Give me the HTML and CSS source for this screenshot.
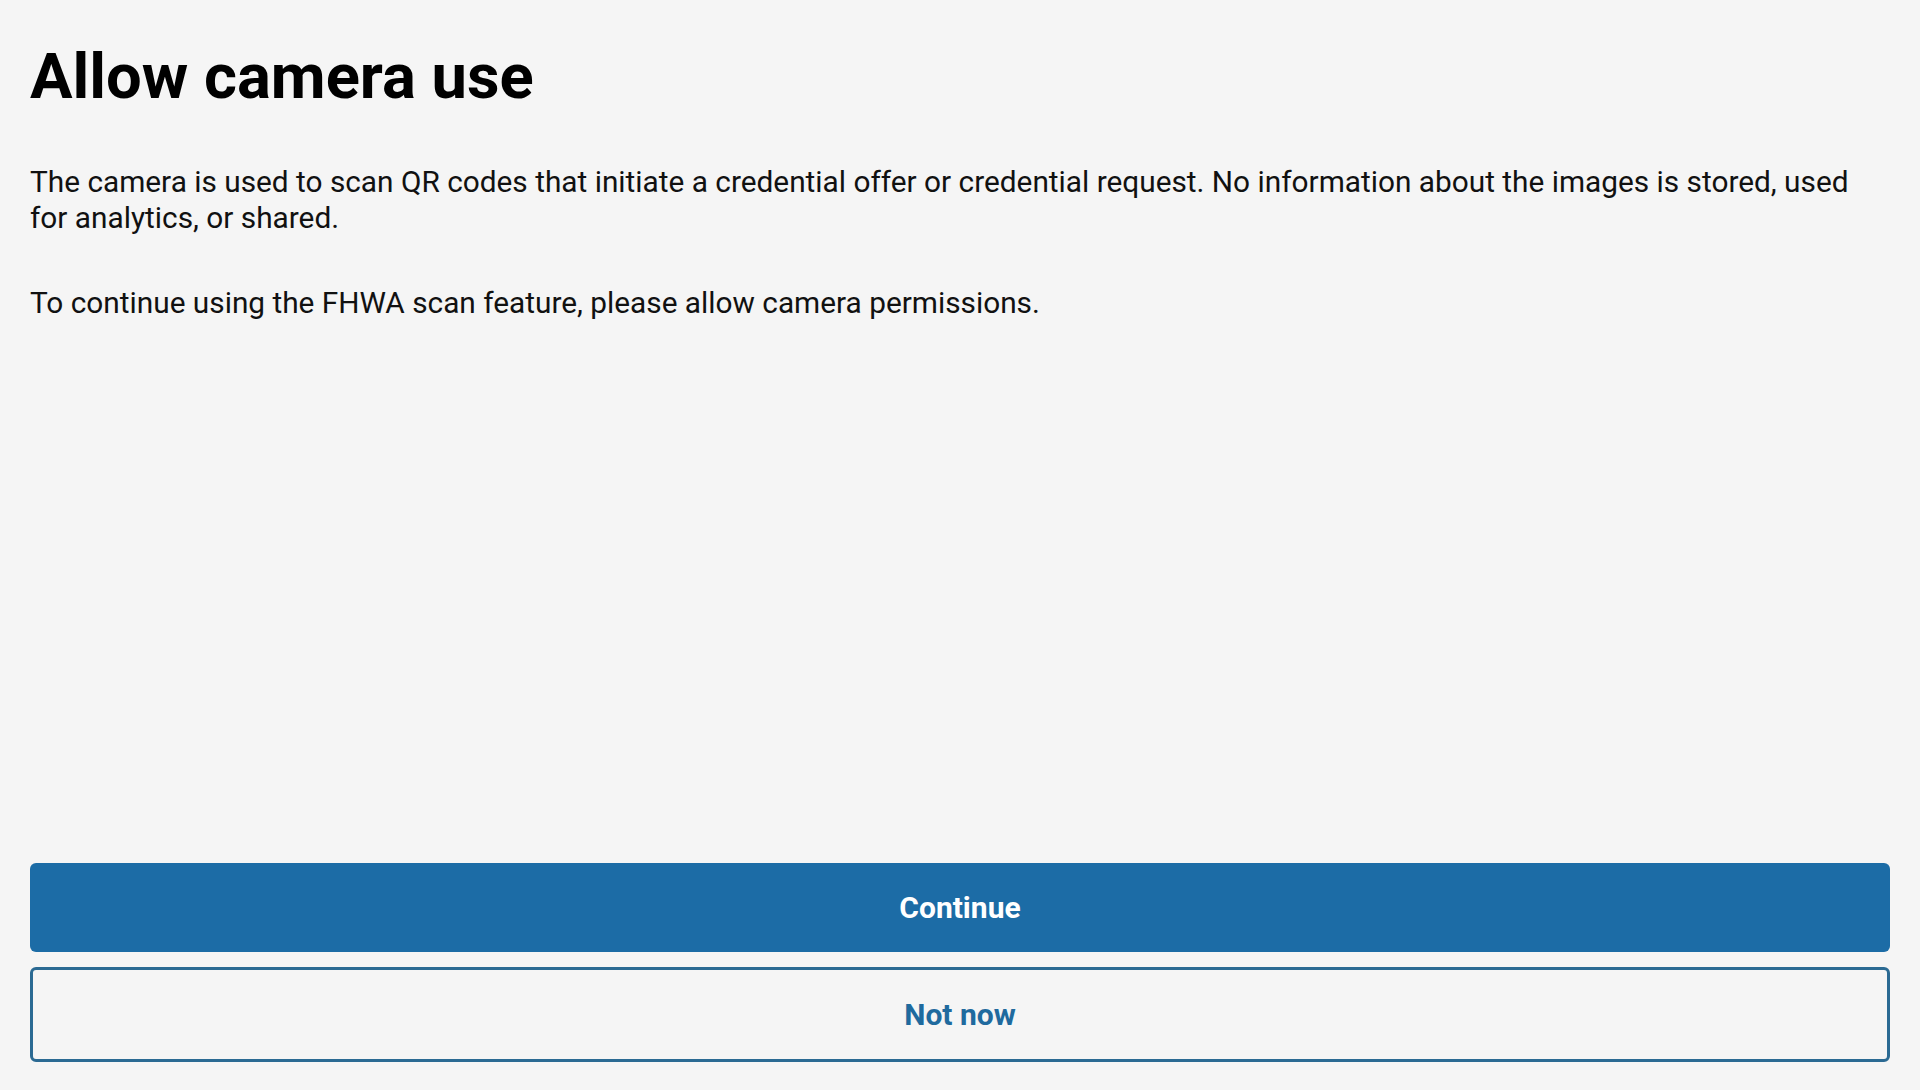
FILE: index.html
```html
<!DOCTYPE html>
<html lang="en">
<head>
<meta charset="utf-8">
<title>Allow camera use</title>
<link rel="stylesheet" href="styles.css">
</head>
<body>
<main class="screen">
  <section class="content">
    <h1 class="title">Allow camera use</h1>
    <p class="text">The camera is used to scan QR codes that initiate a credential offer or credential request. No information about the images is stored, used for analytics, or shared.</p>
    <p class="text">To continue using the FHWA scan feature, please allow camera permissions.</p>
  </section>
  <div class="actions">
    <button class="btn btn-primary">Continue</button>
    <button class="btn btn-outline">Not now</button>
  </div>
</main>
</body>
</html>
```
FILE: styles.css
```css
* { box-sizing: border-box; }
html, body { margin: 0; padding: 0; height: 100%; }
body {
  background: #f5f5f5;
  font-family: Roboto, "Liberation Sans", sans-serif;
  color: #111;
}
.screen {
  height: 100vh;
  display: flex;
  flex-direction: column;
  justify-content: space-between;
  padding: 38px 30px 28px 30px;
}
.title {
  margin: 0;
  font-size: 63.3px;
  line-height: 77px;
  font-weight: 700;
  color: #000;
}
.text {
  margin: 49px 0 0 0;
  font-size: 29.8px;
  line-height: 35.5px;
  font-weight: 400;
  color: #111;
}
.text + .text { margin-top: 50px; }
.actions {
  display: flex;
  flex-direction: column;
  gap: 15px;
}
.btn {
  font-family: Roboto, "Liberation Sans", sans-serif;
  font-size: 30px;
  font-weight: 700;
  border-radius: 6px;
  width: 100%;
  cursor: pointer;
}
.btn-primary {
  height: 89px;
  background: #1c6ca6;
  color: #fff;
  border: none;
}
.btn-outline {
  height: 95px;
  background: transparent;
  color: #1f6a9e;
  border: 3px solid #2b6a93;
}
```
